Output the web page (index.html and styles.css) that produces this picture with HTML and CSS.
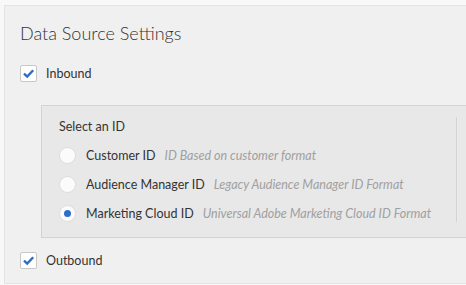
FILE: index.html
```html
<!DOCTYPE html>
<html lang="en">
<head>
    <meta charset="UTF-8">
    <title>Data Source Settings</title>
    <link rel="stylesheet" href="styles.css">
</head>
<body>
    <div class="panel">
        <div class="panel-title">Data Source Settings</div>

        <label class="check-row">
            <span class="checkbox checked">
                <svg width="17" height="17" viewBox="0 0 17 17"><path d="M4 8.6 L7.2 11.6 L13.2 5.2" fill="none" stroke="#2f6dc5" stroke-width="2.4"/></svg>
            </span>
            <span class="check-label">Inbound</span>
        </label>

        <div class="id-box">
            <div class="id-list">
                <div class="id-heading">Select an ID</div>
                <div class="radio-row">
                    <span class="radio"></span>
                    <span class="radio-label">Customer ID</span>
                    <span class="radio-hint">ID Based on customer format</span>
                </div>
                <div class="radio-row">
                    <span class="radio"></span>
                    <span class="radio-label">Audience Manager ID</span>
                    <span class="radio-hint">Legacy Audience Manager ID Format</span>
                </div>
                <div class="radio-row">
                    <span class="radio selected"></span>
                    <span class="radio-label">Marketing Cloud ID</span>
                    <span class="radio-hint">Universal Adobe Marketing Cloud ID Format</span>
                </div>
            </div>
            <div class="id-divider"></div>
        </div>

        <label class="check-row outbound">
            <span class="checkbox checked">
                <svg width="17" height="17" viewBox="0 0 17 17"><path d="M4 8.6 L7.2 11.6 L13.2 5.2" fill="none" stroke="#2f6dc5" stroke-width="2.4"/></svg>
            </span>
            <span class="check-label">Outbound</span>
        </label>
    </div>
</body>
</html>
```

FILE: styles.css
```css
body {
    font-family: Lato, 'Open Sans', sans-serif;
    margin: 0;
    padding: 5px 0 0 4px;
    background-color: #f8f8f8;
    color: #333;
    overflow: hidden;
}

.panel {
    background-color: #f0f0f0;
    border: 1px solid #e3e3e3;
    border-right: none;
    padding: 15px 0 14px 15px;
}

.panel-title {
    font-size: 18px;
    line-height: 24px;
    font-weight: 300;
    color: #333;
    margin-bottom: 20px;
}

.check-row {
    display: flex;
    align-items: center;
    height: 17px;
}

.checkbox {
    width: 15px;
    height: 15px;
    border: 1px solid #c8c8c8;
    background-color: #fff;
    border-radius: 2px;
    display: flex;
    align-items: center;
    justify-content: center;
    margin-right: 9px;
}

.checkbox svg {
    flex: none;
}

.check-label {
    font-size: 12.5px;
    color: #333;
}

.outbound {
    margin-top: 14px;
}

.id-box {
    display: flex;
    margin: 23px 0 0 21px;
    background-color: #e8e8e8;
    border: 1px solid #d3d3d3;
    border-right: none;
}

.id-list {
    flex: 0 0 397px;
    padding: 11px 0 9px 17px;
}

.id-heading {
    font-size: 12.5px;
    line-height: 20px;
    margin-bottom: 4px;
}

.radio-row {
    display: flex;
    align-items: center;
    height: 29px;
    font-size: 12.5px;
}

.radio {
    width: 15px;
    height: 15px;
    border-radius: 50%;
    background-color: #fbfbfb;
    border: 1px solid #dcdcdc;
    margin-right: 10px;
    display: flex;
    align-items: center;
    justify-content: center;
}

.radio.selected::after {
    content: '';
    width: 7px;
    height: 7px;
    border-radius: 50%;
    background-color: #2c6ecb;
}

.radio-label {
    color: #333;
    margin-right: 9px;
}

.radio-hint {
    color: #a0a0a0;
    font-style: italic;
}

.id-divider {
    width: 1px;
    background-color: #d2d2d2;
    border-right: 1px solid #ededed;
    margin: 11px 0 15px;
}
```
